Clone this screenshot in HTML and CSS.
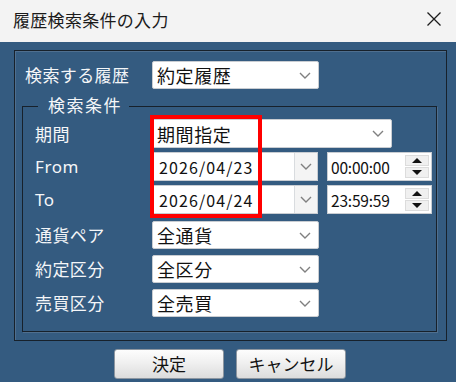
FILE: index.html
```html
<!DOCTYPE html>
<html lang="ja">
<head>
<meta charset="utf-8">
<link rel="stylesheet" href="styles.css">
</head>
<body>
<div class="window">
  <div class="titlebar">
    <span class="title">履歴検索条件の入力</span>
    <svg class="close" width="16" height="16" viewBox="0 0 16 16"><path d="M1.5 1.5 L14.5 14.5 M14.5 1.5 L1.5 14.5" stroke="#1c1c1c" stroke-width="1.3" fill="none"/></svg>
  </div>
  <div class="client">
    <div class="frame">
      <div class="row top-row">
        <span class="label label-top">検索する履歴</span>
        <div class="select w167"><span class="val">約定履歴</span><svg class="chev" width="12" height="7" viewBox="0 0 12 7"><polyline points="1,1 6,6 11,1" fill="none" stroke="#808080" stroke-width="1.4"/></svg></div>
      </div>
      <div class="group">
        <span class="legend">検索条件</span>
        <div class="row h29">
          <span class="label">期間</span>
          <div class="select w240"><span class="val">期間指定</span><svg class="chev" width="12" height="7" viewBox="0 0 12 7"><polyline points="1,1 6,6 11,1" fill="none" stroke="#808080" stroke-width="1.4"/></svg></div>
        </div>
        <div class="row h29">
          <span class="label latin">From</span>
          <div class="combo"><span class="date">2026/04/23</span><span class="dbtn"><svg width="12" height="7" viewBox="0 0 12 7"><polyline points="1,1 6,6 11,1" fill="none" stroke="#808080" stroke-width="1.4"/></svg></span></div>
          <div class="time"><span class="tval">00:00:00</span><span class="spin"><span class="sbtn"><i class="up"></i></span><span class="sbtn"><i class="down"></i></span></span></div>
        </div>
        <div class="row h29">
          <span class="label latin">To</span>
          <div class="combo"><span class="date">2026/04/24</span><span class="dbtn"><svg width="12" height="7" viewBox="0 0 12 7"><polyline points="1,1 6,6 11,1" fill="none" stroke="#808080" stroke-width="1.4"/></svg></span></div>
          <div class="time"><span class="tval">23:59:59</span><span class="spin"><span class="sbtn"><i class="up"></i></span><span class="sbtn"><i class="down"></i></span></span></div>
        </div>
        <div class="row h28 first-lower">
          <span class="label">通貨ペア</span>
          <div class="select w167"><span class="val">全通貨</span><svg class="chev" width="12" height="7" viewBox="0 0 12 7"><polyline points="1,1 6,6 11,1" fill="none" stroke="#808080" stroke-width="1.4"/></svg></div>
        </div>
        <div class="row h28">
          <span class="label">約定区分</span>
          <div class="select w167"><span class="val">全区分</span><svg class="chev" width="12" height="7" viewBox="0 0 12 7"><polyline points="1,1 6,6 11,1" fill="none" stroke="#808080" stroke-width="1.4"/></svg></div>
        </div>
        <div class="row h28">
          <span class="label">売買区分</span>
          <div class="select w167"><span class="val">全売買</span><svg class="chev" width="12" height="7" viewBox="0 0 12 7"><polyline points="1,1 6,6 11,1" fill="none" stroke="#808080" stroke-width="1.4"/></svg></div>
        </div>
        <div class="highlight"></div>
      </div>
    </div>
    <div class="buttons">
      <button class="btn">決定</button>
      <button class="btn">キャンセル</button>
    </div>
  </div>
</div>
</body>
</html>
```
FILE: styles.css
```css
html, body {
  margin: 0;
  padding: 0;
}
body {
  width: 456px;
  height: 382px;
  overflow: hidden;
  font-family: "Noto Sans CJK JP", "Noto Sans", sans-serif;
  background: #335b80;
}
.window {
  width: 456px;
  height: 382px;
  display: flex;
  flex-direction: column;
}
.titlebar {
  height: 42px;
  flex: 0 0 42px;
  background: #f3f3f3;
  display: flex;
  align-items: center;
  justify-content: space-between;
  padding: 0 13px 0 13px;
  box-sizing: border-box;
}
.title {
  font-size: 17px;
  color: #1b1b1b;
  letter-spacing: 0.3px;
  margin-top: -4px;
}
.close {
  margin-top: -5px;
  margin-right: 1px;
}
.client {
  flex: 1;
  background: #345b80;
  padding-top: 8px;
  box-sizing: border-box;
}
.frame {
  margin-left: 14px;
  width: 433px;
  height: 291px;
  box-sizing: border-box;
  border: 1px solid #17212b;
  box-shadow: inset 1px 1px 0 #4f6f8f;
  display: flex;
  flex-direction: column;
}
.row {
  display: flex;
  align-items: center;
}
.top-row {
  margin: 10px 0 0 10px;
  height: 28px;
}
.label {
  color: #f4f6f8;
  font-size: 17px;
  width: 117px;
  flex: 0 0 117px;
  letter-spacing: 0.4px;
  line-height: 20px;
}
.label-top {
  width: 127px;
  flex: 0 0 127px;
}
.label.latin {
  font-family: "Noto Sans", sans-serif;
  letter-spacing: 0.6px;
}
.select {
  height: 100%;
  box-sizing: border-box;
  background: #ffffff;
  border: 1px solid #c9cdd2;
  border-radius: 2px;
  display: flex;
  align-items: center;
  justify-content: space-between;
  padding: 0 7px 0 4px;
}
.w167 { width: 167px; }
.w240 { width: 240px; }
.val {
  font-size: 18px;
  color: #111;
  letter-spacing: 0.6px;
  line-height: 20px;
}
.group {
  position: relative;
  margin: 17px 0 0 7px;
  width: 415px;
  box-sizing: border-box;
  border: 1px solid #17212b;
  box-shadow: 1px 1px 0 #4f6f8f;
  padding: 0 0 8px 12px;
  display: flex;
  flex-direction: column;
}
.legend {
  display: block;
  width: fit-content;
  margin: -12px 0 4px 3px;
  padding: 0 7px 0 10px;
  height: 20px;
  line-height: 20px;
  background: #345b80;
  color: #f4f6f8;
  font-size: 17px;
  letter-spacing: 1.5px;
}
.h29 { height: 29px; margin-bottom: 4px; }
.h28 { height: 28px; margin-bottom: 6px; }
.h28:last-of-type { margin-bottom: 0; }
.first-lower { margin-top: 3px; }
.combo {
  width: 166px;
  height: 29px;
  box-sizing: border-box;
  background: #fff;
  border: 1px solid #c9cdd2;
  display: flex;
  align-items: stretch;
}
.date {
  flex: 1;
  font-size: 16px;
  letter-spacing: 1.1px;
  color: #111;
  padding-left: 6px;
  display: flex;
  align-items: center;
}
.dbtn {
  width: 22px;
  background: #f4f4f4;
  border-left: 1px solid #d9dcdf;
  display: flex;
  align-items: center;
  justify-content: center;
}
.time {
  margin-left: 9px;
  width: 105px;
  height: 29px;
  box-sizing: border-box;
  background: #fff;
  border: 1px solid #c9cdd2;
  display: flex;
  align-items: stretch;
  justify-content: space-between;
  padding: 2px 2px 2px 3px;
}
.tval {
  font-size: 15.5px;
  color: #111;
  display: flex;
  align-items: center;
  letter-spacing: -0.2px;
}
.spin {
  width: 24px;
  display: flex;
  flex-direction: column;
  gap: 1px;
}
.sbtn {
  flex: 1;
  background: #f0f0f0;
  border: 1px solid #dcdcdc;
  display: flex;
  align-items: center;
  justify-content: center;
}
.sbtn i {
  width: 0;
  height: 0;
  border-left: 5px solid transparent;
  border-right: 5px solid transparent;
}
.sbtn i.up { border-bottom: 5px solid #111; }
.sbtn i.down { border-top: 5px solid #111; }
.highlight {
  position: absolute;
  left: 127px;
  top: 8px;
  width: 112px;
  height: 103px;
  box-sizing: border-box;
  border: 4px solid #ff0000;
}
.buttons {
  display: flex;
  gap: 12px;
  margin: 8px 0 0 114px;
}
.btn {
  width: 110px;
  height: 30px;
  box-sizing: border-box;
  border: 1px solid #8d96a0;
  border-radius: 3px;
  background: linear-gradient(#fdfdfd 0%, #f0f0f0 45%, #dcdcdc 100%);
  font-family: "Noto Sans CJK JP", sans-serif;
  font-size: 17px;
  color: #111;
  padding: 0;
  line-height: 26px;
}
```
